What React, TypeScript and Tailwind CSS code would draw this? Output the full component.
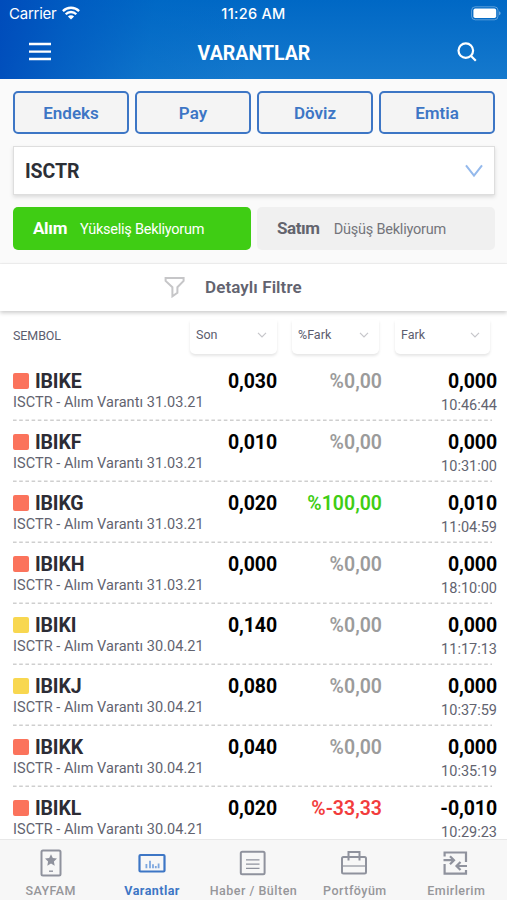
import React from 'react';

const RED = 'bg-[#fb735c]';
const YELLOW = 'bg-[#f8d750]';

type Row = { code: string; date: string; color: string; last: string; pct: string; pctColor: string; diff: string; time: string };

const GRAY = 'text-[#9b9b9b]';

const rows: Row[] = [
  { code: 'IBIKE', date: '31.03.21', color: RED, last: '0,030', pct: '%0,00', pctColor: GRAY, diff: '0,000', time: '10:46:44' },
  { code: 'IBIKF', date: '31.03.21', color: RED, last: '0,010', pct: '%0,00', pctColor: GRAY, diff: '0,000', time: '10:31:00' },
  { code: 'IBIKG', date: '31.03.21', color: RED, last: '0,020', pct: '%100,00', pctColor: 'text-[#3fcd14]', diff: '0,010', time: '11:04:59' },
  { code: 'IBIKH', date: '31.03.21', color: RED, last: '0,000', pct: '%0,00', pctColor: GRAY, diff: '0,000', time: '18:10:00' },
  { code: 'IBIKI', date: '30.04.21', color: YELLOW, last: '0,140', pct: '%0,00', pctColor: GRAY, diff: '0,000', time: '11:17:13' },
  { code: 'IBIKJ', date: '30.04.21', color: YELLOW, last: '0,080', pct: '%0,00', pctColor: GRAY, diff: '0,000', time: '10:37:59' },
  { code: 'IBIKK', date: '30.04.21', color: RED, last: '0,040', pct: '%0,00', pctColor: GRAY, diff: '0,000', time: '10:35:19' },
  { code: 'IBIKL', date: '30.04.21', color: RED, last: '0,020', pct: '%-33,33', pctColor: 'text-[#f23c3c]', diff: '-0,010', time: '10:29:23' },
];

function WifiIcon() {
  return (
    <svg width="18" height="14" viewBox="0 0 18 14" fill="none" stroke="white" strokeWidth="2.3" className="-mt-[2px]">
      <path d="M0.9 5.1a11.5 11.5 0 0 1 16.2 0" />
      <path d="M3.7 8.2a7.5 7.5 0 0 1 10.6 0" />
      <path d="M9 13.6L5.9 10.5a4.4 4.4 0 0 1 6.2 0z" fill="white" stroke="none" />
    </svg>
  );
}

function BatteryIcon() {
  return (
    <svg width="30" height="15" viewBox="0 0 30 15" fill="none">
      <rect x="0.6" y="0.8" width="26.4" height="13" rx="3.6" stroke="white" strokeOpacity="0.35" />
      <rect x="2.4" y="2.6" width="22.8" height="9.4" rx="1.8" fill="white" />
      <path d="M28.2 5.2v4c1.8-.7 1.8-3.3 0-4z" fill="white" fillOpacity="0.5" />
    </svg>
  );
}

function Header() {
  return (
    <header className="h-[79px] shrink-0 bg-[linear-gradient(100deg,#004cbb_0%,rgba(0,88,192,0.75)_14%,rgba(0,104,197,0.35)_30%,rgba(0,106,199,0)_50%),linear-gradient(to_bottom,#0068c5_0%,#1579cd_100%)] text-white">
      <div className="grid h-[27px] grid-cols-3 items-center pr-[6px] pl-[9px] font-['Inter',sans-serif]">
        <div className="flex items-center gap-[6px] text-[15px] leading-[27px]">
          <span className="tracking-[-0.25px]">Carrier</span>
          <WifiIcon />
        </div>
        <div className="-ml-[3px] text-center text-[14.5px] leading-[27px] font-medium tracking-[0.3px]">11:26 AM</div>
        <div className="flex justify-end">
          <BatteryIcon />
        </div>
      </div>
      <div className="flex h-[50px] items-center justify-between pr-[30px] pl-[29px]">
        <svg width="22" height="20" viewBox="0 0 22 20" stroke="white" strokeWidth="2.3">
          <path d="M0 2h22M0 9.6h22M0 17h22" />
        </svg>
        <h1 className="pt-[3px] text-[19.5px] leading-none font-bold tracking-[0.02px]">VARANTLAR</h1>
        <svg width="20" height="20" viewBox="0 0 20 20" fill="none" stroke="white" strokeWidth="2.2">
          <circle cx="8.8" cy="8.6" r="7.3" />
          <path d="M13.8 13.8l5 5" />
        </svg>
      </div>
    </header>
  );
}

function SortBox({ label, className }: { label: string; className: string }) {
  return (
    <div className={`flex h-[34px] items-center justify-between rounded-b-[5px] bg-white pr-[10px] pl-[6px] pb-[4px] text-[12.5px] text-[#5c5d6e] shadow-[0_2px_3px_rgba(0,0,0,0.1)] ${className}`}>
      <span>{label}</span>
      <svg width="10" height="6" viewBox="0 0 10 6" fill="none" stroke="#c6c6ca" strokeWidth="1.2">
        <path d="M1 0.8l4 4 4-4" />
      </svg>
    </div>
  );
}

function WarrantRow({ row }: { row: Row }) {
  return (
    <div className="relative flex h-[61px] shrink-0 pt-[11px] pr-[10px] pl-[13px] whitespace-nowrap">
      <div className="w-[190px]">
        <div className="flex h-[22px] items-center gap-[6px]">
          <span className={`-mt-[2px] h-4 w-4 rounded-[2px] ${row.color}`} />
          <span className="text-[19.5px] leading-[22px] font-bold tracking-[-0.15px] text-[#2c2c35]">{row.code}</span>
        </div>
        <div className="pt-px text-[14.5px] leading-[18px] tracking-[0.05px] text-[#62636f]">ISCTR - Alım Varantı {row.date}</div>
      </div>
      <div className="w-[74px] text-right text-[19.5px] leading-[22px] font-bold tracking-[-0.1px] text-black">{row.last}</div>
      <div className={`w-[105px] text-right text-[19.5px] leading-[22px] font-semibold ${row.pctColor}`}>{row.pct}</div>
      <div className="flex-1 text-right">
        <div className="text-[19.5px] leading-[22px] font-bold tracking-[-0.1px] text-black">{row.diff}</div>
        <div className="pt-[7px] text-[14.5px] leading-[12px] text-[#62636f]">{row.time}</div>
      </div>
      <svg className="absolute bottom-0 left-[13px]" width="479" height="2">
        <path d="M0 1.3h479" stroke="#cfcfcf" strokeWidth="1.4" strokeDasharray="3.6 2.6" />
      </svg>
    </div>
  );
}

const navIcons = {
  page: (
    <svg width="22" height="28" viewBox="0 0 22 28" fill="none" stroke="#8f929d" strokeWidth="2">
      <rect x="1.5" y="1.5" width="19" height="25" rx="1.5" />
      <path d="M11 5.2l1.8 3.9 4.2.5-3.1 2.9.8 4.2-3.7-2.1-3.7 2.1.8-4.2L5 9.6l4.2-.5z" fill="#8f929d" stroke="none" />
      <path d="M9 22.2h4" strokeWidth="1.4" />
    </svg>
  ),
  warrants: (
    <svg width="28" height="28" viewBox="0 0 28 28" fill="none" stroke="#3d76c5" strokeWidth="2.2">
      <rect x="1.5" y="6" width="25" height="16.5" rx="1" />
      <path d="M8.4 19.3v-4.2M12 19.3v-7.5M15 19.3v-4M17.8 19.3v-2.2M20.6 19.3v-4.8" stroke="#7da7df" strokeWidth="1.8" />
    </svg>
  ),
  news: (
    <svg width="28" height="28" viewBox="0 0 28 28" fill="none" stroke="#8f929d" strokeWidth="2">
      <rect x="1.8" y="2.8" width="23.8" height="22.5" rx="1.5" />
      <path d="M7 10.8h13.5M7 15.2h13.5M7 19.4h13.5" strokeWidth="1.3" />
    </svg>
  ),
  portfolio: (
    <svg width="28" height="28" viewBox="0 0 28 28" fill="none" stroke="#8f929d" strokeWidth="2">
      <rect x="1" y="8" width="24" height="16.5" rx="1.5" />
      <path d="M1 17h24" strokeWidth="1.2" />
      <path d="M7.5 11.5V3h11v8.5" />
    </svg>
  ),
  orders: (
    <svg width="28" height="28" viewBox="0 0 28 28" fill="none" stroke="#8f929d" strokeWidth="2.2">
      <path d="M2.6 7.5V3.5H24V13M24 21v3.7H2.6V15" />
      <path d="M1.5 11.2h10M8 7.2l4 4-4 4M25 17H15M18.5 13l-4 4 4 4" />
    </svg>
  ),
};

const navItems = [
  { icon: navIcons.page, label: 'SAYFAM', style: 'text-[#96969a] font-medium tracking-[0.45px]' },
  { icon: navIcons.warrants, label: 'Varantlar', style: 'text-[#3d76c5] font-bold tracking-[0.45px]' },
  { icon: navIcons.news, label: 'Haber / Bülten', style: 'text-[#96969a] font-medium tracking-[0.5px]' },
  { icon: navIcons.portfolio, label: 'Portföyüm', style: 'text-[#96969a] font-medium tracking-[0.5px]' },
  { icon: navIcons.orders, label: 'Emirlerim', style: 'text-[#96969a] font-medium tracking-[0.45px]' },
];

export default function App() {
  return (
    <div className="flex h-[900px] w-[507px] flex-col overflow-hidden bg-white font-['Roboto',sans-serif]">
      <Header />

      <section className="h-[185px] shrink-0 border-b border-[#f0f0f0] bg-[#fafafa] px-[13px] pt-3">
        <div className="grid w-[482px] grid-cols-4 gap-[6px]">
          {['Endeks', 'Pay', 'Döviz', 'Emtia'].map((label) => (
            <button key={label} className="h-[43px] rounded-[5px] border-2 border-[#3d76c5] bg-[#f4f4f4] pt-px text-[17px] leading-none font-semibold text-[#3d76c5]">
              {label}
            </button>
          ))}
        </div>
        <div className="mt-3 flex h-[49px] w-[482px] items-center justify-between border border-[#dedede] bg-white pr-[11px] pl-[11px] shadow-[0_2px_4px_rgba(0,0,0,0.13)]">
          <span className="pt-[2px] text-[19.5px] leading-none font-bold tracking-[-0.1px] text-[#2c2f36]">ISCTR</span>
          <svg width="18" height="14" viewBox="0 0 18 14" fill="none" stroke="#94b9ec" strokeWidth="2">
            <path d="M1 1.3l8 10.4 8-10.4" />
          </svg>
        </div>
        <div className="mt-3 grid w-[482px] grid-cols-2 gap-[6px]">
          <div className="flex h-[43px] items-center gap-[13px] rounded-[5px] bg-[#3fcd14] pl-5 whitespace-nowrap text-white">
            <span className="pt-px text-[17px] font-bold tracking-[-0.3px]">Alım</span>
            <span className="pt-[3px] text-[14.5px] tracking-[-0.25px]">Yükseliş Bekliyorum</span>
          </div>
          <div className="flex h-[43px] items-center gap-[14px] rounded-[5px] bg-[#f0f0f0] pl-5 whitespace-nowrap text-[#63646d]">
            <span className="pt-px text-[17px] font-bold tracking-[-0.4px]">Satım</span>
            <span className="pt-[3px] text-[14.5px] tracking-[-0.22px] text-[#74757b]">Düşüş Bekliyorum</span>
          </div>
        </div>
      </section>

      <div className="flex h-[47px] shrink-0 items-center bg-white pl-[164px] shadow-[0_2px_4px_rgba(0,0,0,0.2)]">
        <svg width="21" height="22" viewBox="0 0 21 22" fill="none" stroke="#c6c6c8" strokeWidth="2" className="-mt-[2px]">
          <path d="M1.6 1.9h18v3l-6.2 6.3v5.5l-5 3.6v-9.1L1.6 4.9z" />
        </svg>
        <span className="pl-5 text-[17px] font-semibold tracking-[0.08px] text-[#62636f]">Detaylı Filtre</span>
      </div>

      <div className="flex h-[49px] shrink-0 pt-[9px] pl-[13px]">
        <span className="w-[177px] pt-[7px] text-[12.5px] leading-[17px] tracking-[-0.1px] text-[#5c5d6e]">SEMBOL</span>
        <SortBox label="Son" className="w-[87px]" />
        <SortBox label="%Fark" className="ml-[15px] w-[87px]" />
        <SortBox label="Fark" className="ml-[16px] w-[95px]" />
      </div>

      <main className="min-h-0 flex-1 overflow-hidden">
        {rows.map((row) => (
          <WarrantRow key={row.code} row={row} />
        ))}
      </main>

      <nav className="grid h-[61px] shrink-0 grid-cols-5 border-t border-[#e8e8e8] bg-[#f7f7f7]">
        {navItems.map((item) => (
          <div key={item.label} className="flex flex-col items-center pt-[9px]">
            {item.icon}
            <span className={`pt-[6px] text-[12.5px] leading-[16px] whitespace-nowrap ${item.style}`}>{item.label}</span>
          </div>
        ))}
      </nav>
    </div>
  );
}
